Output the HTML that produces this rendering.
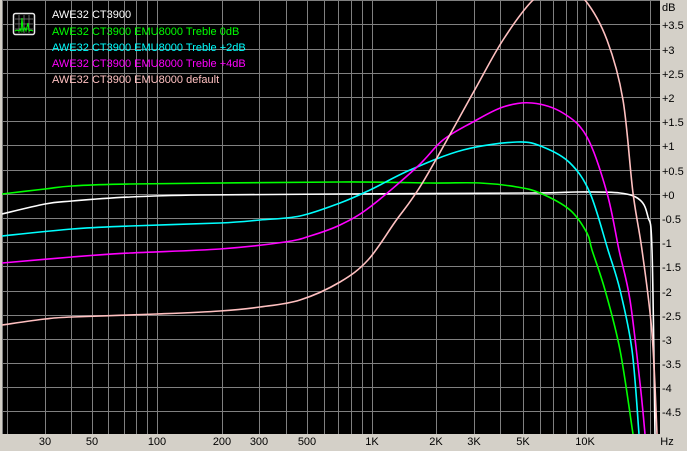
<!DOCTYPE html>
<html><head><meta charset="utf-8"><style>
html,body{margin:0;padding:0;background:#d4d0c8;width:687px;height:451px;overflow:hidden}
svg{display:block;font-family:"Liberation Sans",sans-serif;font-size:11px}
</style></head><body>
<svg width="687" height="451" viewBox="0 0 687 451" xmlns="http://www.w3.org/2000/svg">
<rect x="0" y="0" width="687" height="451" fill="#d4d0c8"/>
<rect x="2" y="0" width="658" height="434" fill="#000"/>
<g stroke="#808080" stroke-width="1" shape-rendering="crispEdges">
<line x1="2" y1="0.5" x2="660" y2="0.5"/>
<line x1="2" y1="24.5" x2="660" y2="24.5"/>
<line x1="2" y1="49.5" x2="660" y2="49.5"/>
<line x1="2" y1="73.5" x2="660" y2="73.5"/>
<line x1="2" y1="97.5" x2="660" y2="97.5"/>
<line x1="2" y1="121.5" x2="660" y2="121.5"/>
<line x1="2" y1="145.5" x2="660" y2="145.5"/>
<line x1="2" y1="170.5" x2="660" y2="170.5"/>
<line x1="2" y1="194.5" x2="660" y2="194.5"/>
<line x1="2" y1="218.5" x2="660" y2="218.5"/>
<line x1="2" y1="242.5" x2="660" y2="242.5"/>
<line x1="2" y1="266.5" x2="660" y2="266.5"/>
<line x1="2" y1="291.5" x2="660" y2="291.5"/>
<line x1="2" y1="315.5" x2="660" y2="315.5"/>
<line x1="2" y1="339.5" x2="660" y2="339.5"/>
<line x1="2" y1="363.5" x2="660" y2="363.5"/>
<line x1="2" y1="387.5" x2="660" y2="387.5"/>
<line x1="2" y1="411.5" x2="660" y2="411.5"/>
<line x1="2.5" y1="0" x2="2.5" y2="434"/>
<line x1="7.5" y1="0" x2="7.5" y2="434"/>
<line x1="45.5" y1="0" x2="45.5" y2="434"/>
<line x1="71.5" y1="0" x2="71.5" y2="434"/>
<line x1="92.5" y1="0" x2="92.5" y2="434"/>
<line x1="108.5" y1="0" x2="108.5" y2="434"/>
<line x1="124.5" y1="0" x2="124.5" y2="434"/>
<line x1="136.5" y1="0" x2="136.5" y2="434"/>
<line x1="147.5" y1="0" x2="147.5" y2="434"/>
<line x1="157.5" y1="0" x2="157.5" y2="434"/>
<line x1="222.5" y1="0" x2="222.5" y2="434"/>
<line x1="259.5" y1="0" x2="259.5" y2="434"/>
<line x1="286.5" y1="0" x2="286.5" y2="434"/>
<line x1="307.5" y1="0" x2="307.5" y2="434"/>
<line x1="324.5" y1="0" x2="324.5" y2="434"/>
<line x1="338.5" y1="0" x2="338.5" y2="434"/>
<line x1="351.5" y1="0" x2="351.5" y2="434"/>
<line x1="362.5" y1="0" x2="362.5" y2="434"/>
<line x1="372.5" y1="0" x2="372.5" y2="434"/>
<line x1="436.5" y1="0" x2="436.5" y2="434"/>
<line x1="474.5" y1="0" x2="474.5" y2="434"/>
<line x1="500.5" y1="0" x2="500.5" y2="434"/>
<line x1="523.5" y1="0" x2="523.5" y2="434"/>
<line x1="540.5" y1="0" x2="540.5" y2="434"/>
<line x1="553.5" y1="0" x2="553.5" y2="434"/>
<line x1="566.5" y1="0" x2="566.5" y2="434"/>
<line x1="577.5" y1="0" x2="577.5" y2="434"/>
<line x1="586.5" y1="0" x2="586.5" y2="434"/>
<line x1="650.5" y1="0" x2="650.5" y2="434"/>
</g>
<svg x="2" y="0" width="658" height="434" viewBox="2 0 658 434" overflow="hidden">
<g id="curves" fill="none" stroke-width="1.6" stroke-linejoin="round">
<polyline stroke="#ffffff" points="2,214 45,204 72,201 130,197 200,195 340,194 530,193 577,192 620,193 640,200 648,217 652,250 655,434"/>
<polyline stroke="#00ff00" points="2,194 45,189 72,186 130,184 340,182 430,183 480,183 517,187 540,193 570,210 587,233 592,250 605,290 620,350 633,434"/>
<polyline stroke="#00ffff" points="2,236 72,229 130,226 220,223 260,220 300,216 340,203 370,190 410,170 463,150 517,142 543,147 570,163 590,193 608,250 620,290 632,350 639,434"/>
<polyline stroke="#ff00ff" points="2,263 72,257 130,253 220,249 285,242 310,236 340,225 370,207 417,167 443,140 473,122 503,107 532,103 563,113 587,137 607,193 619,250 630,300 640,383 645,434"/>
<polyline stroke="#ffc0c0" points="2,325 45,319 72,317 157,314 220,311 260,307 300,300 340,282 368,260 395,222 423,182 473,93 503,40 533,0 560,-18 585,0 607,40 623,100 633,193 642,250 652,333 657,434"/>
</g>
</svg>
<!-- legend icon -->
<rect x="13.5" y="13.5" width="21" height="21" rx="2" fill="#000" stroke="#e8e8e8" stroke-width="1.5"/>
<g stroke="#808080" stroke-width="0.8">
<line x1="19" y1="15" x2="19" y2="33"/><line x1="24" y1="15" x2="24" y2="33"/><line x1="29" y1="15" x2="29" y2="33"/>
<line x1="15" y1="19" x2="33" y2="19"/><line x1="15" y1="24" x2="33" y2="24"/><line x1="15" y1="29" x2="33" y2="29"/>
</g>
<polyline points="15,31 17,30 19,31 20,29 21,31 22,18 23,31 25,28 26,31 28,23 29,31 31,30 33,31" fill="none" stroke="#00ff00" stroke-width="1"/>
<g font-size="11">
<text x="52" y="18" fill="#ffffff">AWE32 CT3900</text>
<text x="52" y="35" fill="#00ff00">AWE32 CT3900 EMU8000 Treble 0dB</text>
<text x="52" y="51" fill="#00ffff">AWE32 CT3900 EMU8000 Treble +2dB</text>
<text x="52" y="67" fill="#ff00ff">AWE32 CT3900 EMU8000 Treble +4dB</text>
<text x="52" y="83" fill="#ffc0c0">AWE32 CT3900 EMU8000 default</text>
</g>
<g fill="#000" font-size="11">
<text x="662" y="11">dB</text>
<text x="662" y="29">+3.5</text>
<text x="662" y="54">+3</text>
<text x="662" y="78">+2.5</text>
<text x="662" y="102">+2</text>
<text x="662" y="126">+1.5</text>
<text x="662" y="150">+1</text>
<text x="662" y="175">+0.5</text>
<text x="662" y="199">+0</text>
<text x="662" y="223">-0.5</text>
<text x="662" y="247">-1</text>
<text x="662" y="271">-1.5</text>
<text x="662" y="296">-2</text>
<text x="662" y="320">-2.5</text>
<text x="662" y="344">-3</text>
<text x="662" y="368">-3.5</text>
<text x="662" y="392">-4</text>
<text x="662" y="416">-4.5</text>
</g>
<g fill="#000" font-size="11" text-anchor="middle">
<text x="45" y="445">30</text>
<text x="92" y="445">50</text>
<text x="157" y="445">100</text>
<text x="222" y="445">200</text>
<text x="259" y="445">300</text>
<text x="307" y="445">500</text>
<text x="372" y="445">1K</text>
<text x="436" y="445">2K</text>
<text x="474" y="445">3K</text>
<text x="523" y="445">5K</text>
<text x="585" y="445">10K</text>
<text x="667" y="445">Hz</text>
</g>
</svg>
<script>
(function(){
var ns="http://www.w3.org/2000/svg";
var pls=document.querySelectorAll('#curves polyline');
for(var i=0;i<pls.length;i++){
 var pl=pls[i];
 var pts=pl.getAttribute('points').trim().split(/\s+/).map(function(s){var a=s.split(',');return [+a[0],+a[1]];});
 var d='M'+pts[0][0]+','+pts[0][1];
 for(var k=0;k<pts.length-1;k++){
  var p0=pts[k-1]||pts[k],p1=pts[k],p2=pts[k+1],p3=pts[k+2]||p2;
  var c1x=p1[0]+(p2[0]-p0[0])/6,c1y=p1[1]+(p2[1]-p0[1])/6;
  var c2x=p2[0]-(p3[0]-p1[0])/6,c2y=p2[1]-(p3[1]-p1[1])/6;
  d+=' C'+c1x.toFixed(1)+','+c1y.toFixed(1)+' '+c2x.toFixed(1)+','+c2y.toFixed(1)+' '+p2[0]+','+p2[1];
 }
 var p=document.createElementNS(ns,'path');
 p.setAttribute('d',d);p.setAttribute('stroke',pl.getAttribute('stroke'));
 pl.parentNode.replaceChild(p,pl);
}
})();
</script>
</body></html>
